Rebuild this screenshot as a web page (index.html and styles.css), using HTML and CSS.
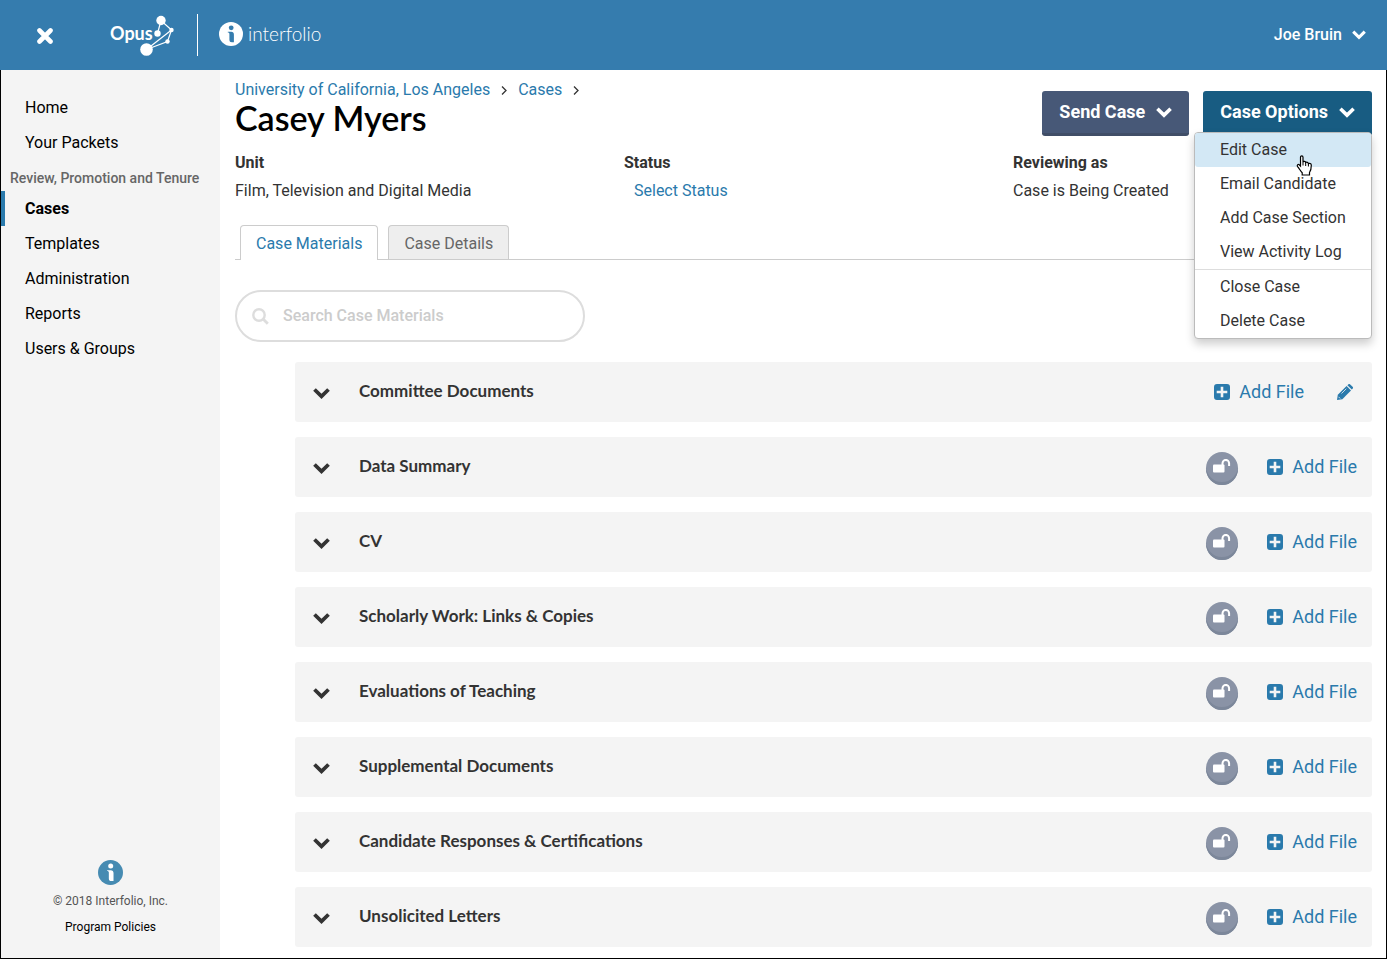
FILE: index.html
```html
<!DOCTYPE html>
<html lang="en">
<head>
    <meta charset="UTF-8">
    <meta name="viewport" content="width=device-width, initial-scale=1.0">
    <title>Casey Myers - Cases</title>
    <link rel="stylesheet" href="styles.css">
</head>

<body>
    <!-- shared icons -->
    <svg class="sprite" aria-hidden="true">
        <symbol id="chevron" viewBox="0 0 17 11">
            <path d="M1.500 1.500l7 6.800 7-6.800" fill="none" stroke="currentColor" stroke-width="3.800"/>
        </symbol>
        <symbol id="plus" viewBox="0 0 16 16">
            <path fill="currentColor" fill-rule="evenodd" d="M3 0h10a3 3 0 0 1 3 3v10a3 3 0 0 1-3 3H3a3 3 0 0 1-3-3V3a3 3 0 0 1 3-3zM6.700 2.700v4H2.700v2.600h4v4h2.600v-4h4V6.700h-4v-4z"/>
        </symbol>
        <symbol id="unlock" viewBox="0 0 18 15">
            <rect x="0" y="5.500" width="11.500" height="8" rx="1" fill="currentColor"/>
            <path d="M9.500 6.500V4.200a3.300 3.300 0 0 1 6.600 0V7" fill="none" stroke="currentColor" stroke-width="2"/>
        </symbol>
        <symbol id="pencil" viewBox="0 0 16 16">
            <path fill="currentColor" d="M.8 10.700L9.600 2l4.400 4.400L5.300 15.200 0 16z"/>
            <path fill="currentColor" d="M10.400 1.200l.8-.8a1.500 1.500 0 0 1 2 0l2.400 2.400a1.500 1.500 0 0 1 0 2l-.8.800z"/>
            <path d="M4.500 9.500l4.800-4.800M1.500 12.800l1.700 1.700" stroke="#f4f4f4" stroke-width=".8"/>
        </symbol>
        <symbol id="info" viewBox="0 0 24 24">
            <circle cx="12" cy="12" r="12" fill="currentColor"/>
            <circle class="info-mark" cx="12.200" cy="5.800" r="2.400"/>
            <path class="info-mark" d="M8.800 9.800h3.400c1.800 0 2.700 1 2.700 2.700v7.700h-2c-1.700 0-2.500-.8-2.500-2.500V12c0-1-.5-1.500-1.600-1.500z"/>
        </symbol>
    </svg>

    <header class="topbar">
        <button class="close" aria-label="Close menu">
            <svg width="16" height="16" viewBox="0 0 16 16"><path d="M2.500 2.500l11 11M13.500 2.500l-11 11" stroke="currentColor" stroke-width="4.600" stroke-linecap="round"/></svg>
        </button>
        <a href="#" class="opus">
            <svg width="64" height="42" viewBox="0 0 64 42">
                <text x="0" y="26" class="opus-text">Opus</text>
                <path d="M47.500 19.500L51 6.500l10.500 9.500-4 11.500-21 8L61.500 16" fill="none" stroke="#fff" stroke-width="1.200"/>
                <g fill="#fff">
                    <circle cx="51" cy="6.500" r="4.700"/>
                    <circle cx="47.500" cy="19.500" r="3.200"/>
                    <circle cx="61.500" cy="16" r="2.200"/>
                    <circle cx="57.500" cy="27.500" r="2.200"/>
                    <circle cx="36.500" cy="35.500" r="6.300"/>
                </g>
            </svg>
        </a>
        <a href="#" class="interfolio">
            <svg class="logo" width="24" height="24"><use href="#info"/></svg>
            interfolio
        </a>
        <button class="user">Joe Bruin <svg width="14" height="10"><use href="#chevron"/></svg></button>
    </header>

    <div class="page">
        <aside class="sidebar">
            <nav>
                <a href="#">Home</a>
                <a href="#">Your Packets</a>
                <h2>Review, Promotion and Tenure</h2>
                <a href="#" class="active">Cases</a>
                <a href="#">Templates</a>
                <a href="#">Administration</a>
                <a href="#">Reports</a>
                <a href="#">Users &amp; Groups</a>
            </nav>
            <footer>
                <svg class="logo" width="25" height="25"><use href="#info"/></svg>
                <span>© 2018 Interfolio, Inc.</span>
                <a href="#">Program Policies</a>
            </footer>
        </aside>

        <main>
            <div class="heading">
                <div class="heading-text">
                    <nav class="breadcrumb">
                        <a href="#">University of California, Los Angeles</a>
                        <svg width="6" height="9" viewBox="0 0 6 9"><path d="M1 .5l4 4-4 4" fill="none" stroke="#333" stroke-width="1.300"/></svg>
                        <a href="#">Cases</a>
                        <svg width="6" height="9" viewBox="0 0 6 9"><path d="M1 .5l4 4-4 4" fill="none" stroke="#333" stroke-width="1.300"/></svg>
                    </nav>
                    <h1>Casey Myers</h1>
                </div>
                <div class="actions">
                    <button class="btn">Send Case <svg width="16" height="11"><use href="#chevron"/></svg></button>
                    <div class="dropdown">
                        <button class="btn btn-open" aria-expanded="true">Case Options <svg width="16" height="11"><use href="#chevron"/></svg></button>
                        <div class="menu">
                            <a href="#" class="hover">Edit Case</a>
                            <a href="#">Email Candidate</a>
                            <a href="#">Add Case Section</a>
                            <a href="#">View Activity Log</a>
                            <hr>
                            <a href="#">Close Case</a>
                            <a href="#">Delete Case</a>
                            <svg class="pointer" width="17" height="21" viewBox="0 0 17 21">
                                <path d="M4.500 2.200C4.500.3 7 .3 7 2.200V7c.5-1 2.500-.8 2.700.6 1-.8 2.500-.3 2.700 1 1.200-.6 2.900 0 2.900 1.600 0 3.800-.3 5.200-1.800 7.300V20H6.200v-2.200c-1.400-1.300-2.600-3.700-4.600-6.200-1-1.500.4-2.700 1.600-1.800l1.300 1.300z" fill="#fff" stroke="#000" stroke-width="1.200"/>
                                <path d="M7 7v3.500M9.700 8v3M12.400 9v2.500" stroke="#000" stroke-width="1"/>
                            </svg>
                        </div>
                    </div>
                </div>
            </div>

            <dl class="details">
                <div><dt>Unit</dt><dd>Film, Television and Digital Media</dd></div>
                <div><dt>Status</dt><dd><a href="#" class="select-status">Select Status</a></dd></div>
                <div><dt>Reviewing as</dt><dd>Case is Being Created</dd></div>
            </dl>

            <div class="tabs">
                <button class="tab selected">Case Materials</button>
                <button class="tab">Case Details</button>
            </div>

            <label class="search">
                <svg width="17" height="17" viewBox="0 0 17 17"><circle cx="7" cy="7" r="5.700" fill="none" stroke="#ddd" stroke-width="2.400"/><path d="M11.300 11.300l4.500 4.500" stroke="#ddd" stroke-width="2.800"/></svg>
                <input type="text" placeholder="Search Case Materials" aria-label="Search Case Materials">
            </label>

            <div class="sections">
                <section class="row">
                    <button class="toggle" aria-label="Expand"><svg width="17" height="11"><use href="#chevron"/></svg></button>
                    <h3>Committee Documents</h3>
                    <button class="add"><svg width="16" height="16"><use href="#plus"/></svg>Add File</button>
                    <button class="edit" aria-label="Edit"><svg width="16" height="16"><use href="#pencil"/></svg></button>
                </section>
                <section class="row">
                    <button class="toggle" aria-label="Expand"><svg width="17" height="11"><use href="#chevron"/></svg></button>
                    <h3>Data Summary</h3>
                    <button class="lock" aria-label="Lock"><svg width="18" height="15"><use href="#unlock"/></svg></button>
                    <button class="add"><svg width="16" height="16"><use href="#plus"/></svg>Add File</button>
                </section>
                <section class="row">
                    <button class="toggle" aria-label="Expand"><svg width="17" height="11"><use href="#chevron"/></svg></button>
                    <h3>CV</h3>
                    <button class="lock" aria-label="Lock"><svg width="18" height="15"><use href="#unlock"/></svg></button>
                    <button class="add"><svg width="16" height="16"><use href="#plus"/></svg>Add File</button>
                </section>
                <section class="row">
                    <button class="toggle" aria-label="Expand"><svg width="17" height="11"><use href="#chevron"/></svg></button>
                    <h3>Scholarly Work: Links &amp; Copies</h3>
                    <button class="lock" aria-label="Lock"><svg width="18" height="15"><use href="#unlock"/></svg></button>
                    <button class="add"><svg width="16" height="16"><use href="#plus"/></svg>Add File</button>
                </section>
                <section class="row">
                    <button class="toggle" aria-label="Expand"><svg width="17" height="11"><use href="#chevron"/></svg></button>
                    <h3>Evaluations of Teaching</h3>
                    <button class="lock" aria-label="Lock"><svg width="18" height="15"><use href="#unlock"/></svg></button>
                    <button class="add"><svg width="16" height="16"><use href="#plus"/></svg>Add File</button>
                </section>
                <section class="row">
                    <button class="toggle" aria-label="Expand"><svg width="17" height="11"><use href="#chevron"/></svg></button>
                    <h3>Supplemental Documents</h3>
                    <button class="lock" aria-label="Lock"><svg width="18" height="15"><use href="#unlock"/></svg></button>
                    <button class="add"><svg width="16" height="16"><use href="#plus"/></svg>Add File</button>
                </section>
                <section class="row">
                    <button class="toggle" aria-label="Expand"><svg width="17" height="11"><use href="#chevron"/></svg></button>
                    <h3>Candidate Responses &amp; Certifications</h3>
                    <button class="lock" aria-label="Lock"><svg width="18" height="15"><use href="#unlock"/></svg></button>
                    <button class="add"><svg width="16" height="16"><use href="#plus"/></svg>Add File</button>
                </section>
                <section class="row">
                    <button class="toggle" aria-label="Expand"><svg width="17" height="11"><use href="#chevron"/></svg></button>
                    <h3>Unsolicited Letters</h3>
                    <button class="lock" aria-label="Lock"><svg width="18" height="15"><use href="#unlock"/></svg></button>
                    <button class="add"><svg width="16" height="16"><use href="#plus"/></svg>Add File</button>
                </section>
            </div>
        </main>
    </div>
</body>
</html>
```

FILE: styles.css
```css
* {
    box-sizing: border-box;
}
body {
    margin: 0;
    min-height: 100vh;
    display: flex;
    flex-direction: column;
    font-family: Roboto, sans-serif;
    font-size: 16px;
    line-height: 20px;
    color: #333;
    background: #fff;
}
h1, h2, h3, dl, dd {
    margin: 0;
}
a {
    color: #2a7aac;
    text-decoration: none;
}
button {
    font: inherit;
    color: inherit;
    background: none;
    border: none;
    padding: 0;
    cursor: pointer;
}
svg {
    display: block;
    flex: none;
}
.sprite {
    position: absolute;
    width: 0;
    height: 0;
}

/* top bar */
.topbar {
    display: flex;
    align-items: center;
    height: 70px;
    padding: 0 21px 0 37px;
    background: #357cae;
    color: #fff;
}
.close {
    margin-right: 57px;
    padding-top: 2px;
}
.opus {
    padding-right: 23px;
    border-right: 1px solid #fff;
}
.opus-text {
    font-family: Lato, sans-serif;
    font-size: 18px;
    font-weight: 700;
    fill: #fff;
}
.interfolio {
    display: flex;
    align-items: center;
    gap: 5px;
    margin-left: 21px;
    padding-bottom: 2px;
    color: #fff;
    font-family: Lato, sans-serif;
    font-size: 19px;
    font-weight: 300;
}
.topbar .logo {
    --mark: #357cae;
}
.info-mark {
    fill: var(--mark);
}
.user {
    display: flex;
    align-items: center;
    gap: 10px;
    margin-left: auto;
    font-weight: 500;
}

/* page frame */
.page {
    flex: 1;
    display: flex;
    border: 1px solid #000;
    border-top: none;
}

/* sidebar */
.sidebar {
    display: flex;
    flex-direction: column;
    justify-content: space-between;
    flex: none;
    width: 219px;
    padding: 20px 0 21px;
    background: #f4f4f4;
}
.sidebar nav a {
    display: block;
    padding-left: 24px;
    line-height: 35px;
    color: #000;
}
.sidebar h2 {
    padding: 8px 0 3px 9px;
    font-size: 14px;
    font-weight: 500;
    color: #666;
}
.sidebar nav .active {
    padding-left: 20px;
    border-left: 4px solid #2a7aac;
    font-weight: 700;
}
.sidebar footer {
    display: flex;
    flex-direction: column;
    align-items: center;
    gap: 6px;
    font-size: 12px;
    color: #555;
}
.sidebar footer a {
    color: #000;
}
.sidebar .logo {
    --mark: #fff;
    color: #468bb2;
}

/* main column */
main {
    flex: 1;
    padding: 10px 14px 11px 15px;
}
.heading {
    display: flex;
    justify-content: space-between;
}
.breadcrumb {
    display: flex;
    align-items: center;
    gap: 11px;
}
h1 {
    font-family: Lato, sans-serif;
    font-size: 34px;
    font-weight: 600;
    line-height: 36px;
    color: #000;
}
.actions {
    display: flex;
    align-items: flex-start;
    gap: 14px;
    padding-top: 11px;
}
.btn {
    display: flex;
    align-items: center;
    gap: 11px;
    height: 45px;
    padding: 0 17px;
    border-bottom: 3px solid #404e67;
    border-radius: 3px;
    background: #475877;
    color: #fff;
    font-size: 18px;
    font-weight: 700;
}
.btn-open {
    background: #185c82;
    border-color: #185c82;
}
.dropdown {
    position: relative;
}
.menu {
    position: absolute;
    top: 41px;
    right: 0;
    width: 178px;
    border: 1px solid #bbb;
    border-radius: 4px;
    background: #fff;
    box-shadow: 0 5px 10px rgba(0, 0, 0, 0.2);
}
.menu a {
    display: block;
    padding-left: 25px;
    line-height: 34px;
    color: #333;
}
.menu .hover {
    border-radius: 3px;
    background: #d3e8f5;
}
.menu hr {
    margin: 0;
    border: none;
    border-top: 1px solid #ddd;
}
.pointer {
    position: absolute;
    top: 22px;
    left: 101px;
}

.details {
    display: grid;
    grid-template-columns: repeat(3, 1fr);
    gap: 30px;
    padding: 17px 0 24px;
}
dt {
    margin-bottom: 8px;
    font-weight: 700;
}
.select-status {
    padding-left: 10px;
}

.tabs {
    display: flex;
    gap: 10px;
    padding-left: 5px;
    border-bottom: 1px solid #ccc;
}
.tab {
    height: 34px;
    padding: 2px 15px 0;
    border: 1px solid #ccc;
    border-bottom: none;
    border-radius: 4px 4px 0 0;
    background: #eee;
    color: #666;
}
.tab.selected {
    height: 35px;
    margin-bottom: -1px;
    background: #fff;
    color: #2a7aac;
}

.search {
    display: flex;
    align-items: center;
    gap: 14px;
    width: 350px;
    height: 52px;
    margin: 30px 0 20px;
    padding: 0 15px;
    border: 2px solid #ddd;
    border-radius: 26px;
}
.search input {
    flex: 1;
    min-width: 0;
    padding: 0;
    border: none;
    outline: none;
    background: none;
    font: inherit;
}
.search input::placeholder {
    color: #ccc;
    font-weight: 500;
}

/* case sections */
.sections {
    display: flex;
    flex-direction: column;
    gap: 15px;
    margin-left: 60px;
}
.row {
    display: flex;
    align-items: center;
    gap: 29px;
    height: 60px;
    padding: 0 15px 0 18px;
    border-radius: 3px;
    background: #f4f4f4;
}
.toggle {
    padding-top: 2px;
}
h3 {
    flex: 1;
    padding-bottom: 2px;
    font-family: Lato, sans-serif;
    font-size: 17px;
    font-weight: 700;
}
.add {
    display: flex;
    align-items: center;
    gap: 9px;
    font-size: 18px;
    color: #2a7aac;
}
.edit {
    padding: 0 4px;
    color: #2a7aac;
}
.lock {
    display: flex;
    align-items: center;
    justify-content: center;
    width: 32px;
    height: 33px;
    margin-top: 3px;
    padding-bottom: 4px;
    border-radius: 50%;
    background: #8a93a6;
    box-shadow: inset 0 -3px #7c879a;
    color: #fff;
}
```
